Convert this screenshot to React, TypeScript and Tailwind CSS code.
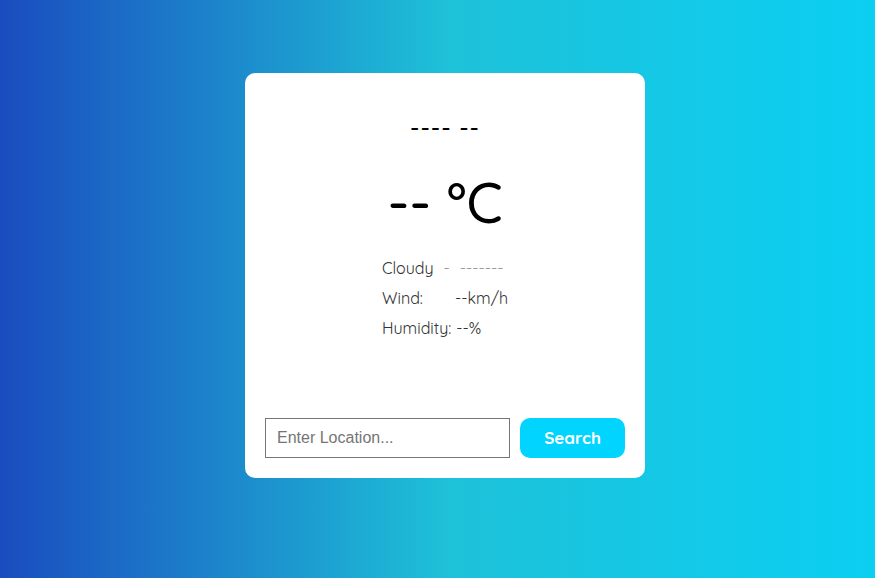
import React from "react";

export default function App() {
    const [city, setCity] = React.useState("");

    return (
        <div
            className="w-full h-[578px] flex items-start justify-center pt-[73px] pl-[15px] font-['Quicksand','Noto_Sans',sans-serif]"
            style={{ background: "linear-gradient(to right, #1a4cbf 0%, #1ec1d8 51%, #0bcff2 100%)" }}
        >
            <div className="w-[400px] h-[405px] bg-white rounded-[10px] flex flex-col items-center pt-[43px] pb-5 px-5">
                {/* city + country placeholder */}
                <div className="text-[24px] leading-none text-black font-medium tracking-[1px]">---- --</div>

                {/* temperature */}
                <div className="mt-[34px] text-[56px] leading-none text-black font-medium">-- °C</div>

                {/* conditions */}
                <div className="mt-[29px] self-start ml-[117px] flex flex-col gap-[11px] text-[16px] leading-[19px] text-[#333]">
                    <div className="flex gap-[10px]">
                        <span>Cloudy</span>
                        <span className="text-[#999]">-</span>
                        <span className="text-[#999]">-------</span>
                    </div>
                    <div className="flex">
                        <span className="w-[73px]">Wind:</span>
                        <span>--km/h</span>
                    </div>
                    <div className="flex gap-[5px]">
                        <span>Humidity:</span>
                        <span>--%</span>
                    </div>
                </div>

                {/* search */}
                <div className="mt-auto w-full flex gap-[10px]">
                    <input
                        value={city}
                        onChange={(e) => setCity(e.target.value)}
                        placeholder="Enter Location..."
                        className="w-[245px] h-[40px] border border-[#767676] px-[11px] text-[16px] font-['Liberation_Sans',sans-serif] text-black placeholder:text-[#757575] outline-none"
                    />
                    <button className="w-[105px] h-[40px] rounded-[10px] bg-[#00d4ff] text-white text-[17px] font-bold">
                        Search
                    </button>
                </div>
            </div>
        </div>
    );
}
